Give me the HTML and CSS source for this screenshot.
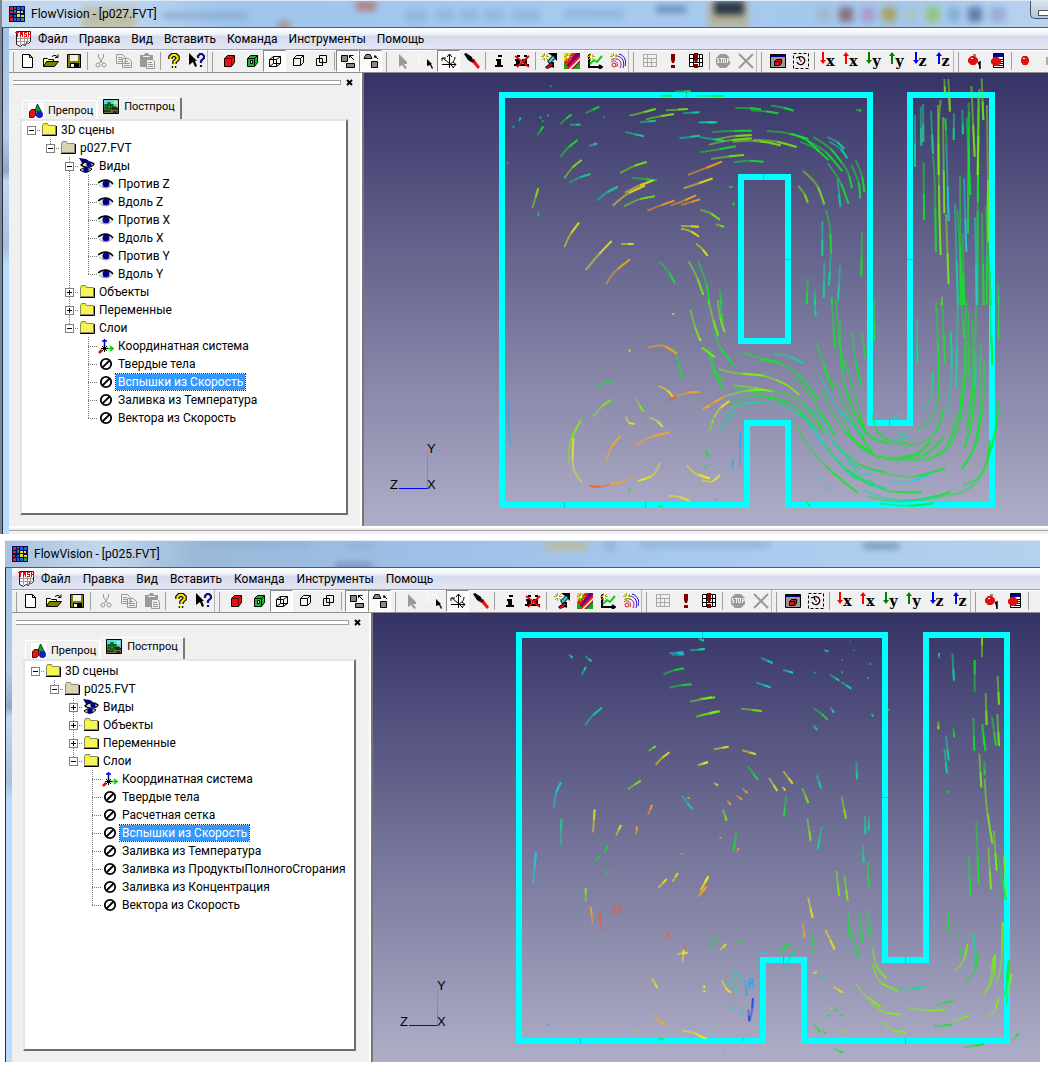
FILE: index.html
```html
<!DOCTYPE html>
<html lang="ru">
<head>
<meta charset="utf-8">
<title>FlowVision</title>
<link rel="stylesheet" href="styles.css">
</head>
<body>
<svg class="sprite" aria-hidden="true">
  <symbol id="i-app" viewBox="0 0 16 16"><path fill="#001060" d="M0 0h16v16H0z"/><path fill="#e02020" d="M1 1h3v3H1zM5 1h2v2H5zM1 5h3v2H1zM1 9h2v2H1zM1 12h3v3H1z"/><path fill="#2060e0" d="M8 1h3v3H8zM12 1h3v3h-3zM5 5h2v2H5zM5 9h2v2H5zM5 12h2v3H5zM8 12h3v3H8z"/><path fill="#f0d820" d="M8 5h3v2H8zM8 8h3v3H8zM12 9h3v2h-3zM12 5h2v2h-2z"/><path fill="#20a060" d="M12 12h3v3h-3zM5 4h2v1H5z"/></symbol>
  <symbol id="i-task" viewBox="0 0 16 16"><path fill="#fff" stroke="#222" d="M1.500.500h14v10l-2 2-2-1-1 3-3-1-2 2-4-2z"/><path stroke="#999" d="M2 7.500h13M2 10.500h12M5.500 6v8M9.500 6v8M12.500 6v6"/><path fill="#e01010" d="M0 1h4v1H3v4H2V2H0zM5 1h3v5H7V4H6v2H5zM9 1h3v1h-2v1h2v3H9V5h2V4H9zM13 1h1v2h2v3h-1V4h-1v2h-1z"/></symbol>
  <symbol id="i-new" viewBox="0 0 16 16"><path fill="#fff" stroke="#000" d="M2.500 1.500h7l3 3v10h-10zM9.500 1.500v3h3"/></symbol>
  <symbol id="i-open" viewBox="0 0 16 16"><path fill="#ffffa0" stroke="#000" d="M.5 13V5.500h4l1 1h5V9"/><path fill="#808000" stroke="#000" d="M.5 13.500l3-5h12l-4 5z"/><path fill="none" stroke="#000" d="M9 3.500l2-1h2l1.500 2M12 4.500h3v-3"/></symbol>
  <symbol id="i-save" viewBox="0 0 16 16"><path fill="#808000" stroke="#000" d="M1.500 1.500h13v13h-13z"/><path fill="#f0f0f0" d="M4 2h8v6H4z"/><path d="M4 10h9v5H4z"/><path fill="#f0f0f0" d="M5 11h3v3H5z"/></symbol>
  <symbol id="i-cut" viewBox="0 0 16 16"><path fill="none" stroke="#999" d="M5.500 1v3l4 6M10.500 1v3l-4 6"/><circle cx="5" cy="12" r="2" fill="none" stroke="#999"/><circle cx="11" cy="12" r="2" fill="none" stroke="#999"/></symbol>
  <symbol id="i-copy" viewBox="0 0 16 16"><path fill="#eee" stroke="#999" d="M.5 1.500h6l3 3v6h-9zM6.500 5.500h6l3 3v6h-9z"/><path stroke="#999" d="M2 4.500h4M2 6.500h4M2 8.500h4M8 8.500h4M8 10.500h6M8 12.500h6"/></symbol>
  <symbol id="i-paste" viewBox="0 0 16 16"><path fill="#999" d="M1 2h4l1-2h3l1 2h4v12H1z"/><path fill="#eee" stroke="#999" d="M7.500 6.500h6l2 2v7h-8z"/><path stroke="#999" d="M9 9.500h4M9 11.500h5M9 13.500h5"/><path stroke="#eee" d="M4 3.500h7"/></symbol>
  <symbol id="i-help" viewBox="0 0 16 16"><path fill="none" stroke="#000" stroke-width="4.500" d="M4.500 6V4l2-2h3l2 2v2l-3 3v2M8 13v2"/><path fill="none" stroke="#f8e800" stroke-width="2.200" d="M4.500 6V4l2-2h3l2 2v2l-3 3v2M8 13v2"/></symbol>
  <symbol id="i-what" viewBox="0 0 16 16"><path d="M0 0l8 8H6l2 5-2 1-2-5-4 3z"/><path fill="none" stroke="#101080" stroke-width="2.200" d="M9 5V3l2-2h2l2 2v2l-3 3v2M12 12v2"/></symbol>
  <symbol id="i-cubered" viewBox="0 0 16 16"><path fill="#f01010" stroke="#000" d="M3.500 5.500l3-3h7v7l-3 4h-7z"/><path fill="none" stroke="#600" d="M3.500 5.500h7v7M10.500 5.500l3-3"/></symbol>
  <symbol id="i-cubegreen" viewBox="0 0 16 16"><path fill="#10c020" stroke="#000" d="M3.500 5.500l3-3h7v7l-3 4h-7z"/><path fill="#eee" stroke="#000" d="M6.500 7.500h2v3h-2z"/><path fill="none" stroke="#000" d="M3.500 5.500h7v7M10.500 5.500l3-3"/></symbol>
  <symbol id="i-cubewire" viewBox="0 0 16 16"><path fill="none" stroke="#000" d="M2.500 6.500h7v7h-7zM6.500 3.500h7v7h-7zM2.500 6.500l4-3M9.500 6.500l4-3M2.500 13.500l4-3M9.500 13.500l4-3"/></symbol>
  <symbol id="i-cube" viewBox="0 0 16 16"><path fill="#f4f4f4" stroke="#000" d="M3.500 5.500l3-3h7v7l-3 3h-7zM3.500 5.500h7v7M10.500 5.500l3-3"/></symbol>
  <symbol id="i-cube2" viewBox="0 0 16 16"><path fill="none" stroke="#000" d="M3.500 5.500h6v7h-6zM6.500 2.500h7v7h-7z"/></symbol>
  <symbol id="i-move" viewBox="0 0 16 16"><path fill="#888" stroke="#000" d="M1.500 2.500h6v6h-6zM6.500 10.500h8v4h-8z"/><path fill="none" stroke="#000" d="M9.500 5V2.500h4M9 2l5 5"/></symbol>
  <symbol id="i-move2" viewBox="0 0 16 16"><path fill="#888" stroke="#000" d="M1 5.500l2-4h4l2 4zM8.500 8.500h6v6h-6z"/><path fill="none" stroke="#000" d="M15 6l-3-3M11 4h3M12 2v3"/></symbol>
  <symbol id="i-arrow" viewBox="0 0 16 16"><path fill="#999" d="M4 1l8 8v2H9l3 4-2 1-3-4-3 2z"/></symbol>
  <symbol id="i-select" viewBox="0 0 16 16"><path fill="none" stroke="#fff" stroke-dasharray="2 1" d="M.5 1.500h9v8h-9z"/><path d="M9 6l5 5h-1l2 4-1 1-2-4-3 1z"/></symbol>
  <symbol id="i-axes" viewBox="0 0 16 16"><path fill="none" stroke="#000" d="M8.500 1v14M6 4l2.500-3L11 4M1 11.500h14M12 9l3 2.500-3 3M2 5l7 6 4 4M1 8V5h4M8 11c4-1 6-4 6-7"/></symbol>
  <symbol id="i-brush" viewBox="0 0 16 16"><path d="M0 1l2-1 6 4 1 3-2 2-3-2z"/><path fill="#f01010" d="M7 8l3-2 6 8-2 2z"/><path fill="#600" d="M7 8l3-2 1 2-3 2z"/></symbol>
  <symbol id="i-info" viewBox="0 0 16 16"><path d="M7 2h4v2H7zM5 6h5v6h2v2H4v-2h2V8H5z"/></symbol>
  <symbol id="i-infox" viewBox="0 0 16 16"><path d="M3 2h3v2H3zM1 6h5v5h2v2H0v-2h2V8H1zM10 2h3v2h-3zM8 6h5v5h2v2H8v-2h2V8H8z"/><path stroke="#e01010" stroke-width="2" d="M1 3l14 11M15 3L3 14"/></symbol>
  <symbol id="i-star" viewBox="0 0 16 16"><path stroke="#aaa820" d="M3.500 0v8M0 3.500h8M1 1l6 6M7 1L1 7"/><path fill="#ffe" d="M3 3h2v2H3z"/></symbol>
  <symbol id="i-vec" viewBox="0 0 16 16"><path d="M7 0h9v8l-2-2-5 5-3-3 5-5zM7 9h6v6l-2-1-5 2-2-2 4-3z"/><path stroke="#30d0e0" stroke-width="2.500" d="M8 9l5-5"/><path stroke="#c01010" stroke-width="2.500" d="M6 15l5-4"/><use href="#i-star"/></symbol>
  <symbol id="i-fill" viewBox="0 0 16 16"><path fill="#700080" d="M0 0h16v16H0z"/><path fill="#f0e010" d="M0 0h9L0 12z"/><path fill="#f02010" d="M8 0h4L1 15H0V9z"/><path fill="#f02010" d="M16 2v6l-8 8H2z"/><path fill="#fff" d="M16 5v2l-9 9H5z"/><path fill="#10b010" d="M16 9v7H9zM0 9v7l5-1z"/><use href="#i-star"/></symbol>
  <symbol id="i-plot" viewBox="0 0 16 16"><path fill="none" stroke="#000" stroke-width="2" d="M2 1v13h13M12 12l3 2-3 2"/><path fill="none" stroke="#10d010" stroke-width="2" d="M3 11l4-4 3 2 5-6"/><use href="#i-star"/></symbol>
  <symbol id="i-iso" viewBox="0 0 16 16"><circle cx="4" cy="12" r="2" fill="none" stroke="#e01010"/><path fill="none" stroke="#d02060" d="M1 9c3-3 8 0 6 5"/><path fill="none" stroke="#a010a0" d="M2 6c7-2 11 4 8 9"/><path fill="none" stroke="#4010c0" d="M6 3c7 0 9 7 7 12"/><path fill="none" stroke="#1010e0" d="M9 1c6 1 8 9 6 12"/><use href="#i-star"/></symbol>
  <symbol id="i-grid" viewBox="0 0 16 16"><path fill="none" stroke="#aaa" d="M1.500 1.500h13v12h-13zM1 5.500h14M1 9.500h14M5.500 1v13M9.500 5v9"/></symbol>
  <symbol id="i-bang" viewBox="0 0 16 16"><path fill="#800000" d="M6 1h4v6L9 10H7L6 7zM6 12h4v3H6z"/></symbol>
  <symbol id="i-gridbang" viewBox="0 0 16 16"><path fill="#fff" stroke="#000" d="M1.500 1.500h13v12h-13zM1 5.500h14M1 9.500h14M5.500 2v12M11.500 2v12"/><path fill="#800000" d="M6 0h4v7L9 9H7L6 7zM6 11h4v4H6z"/></symbol>
  <symbol id="i-stop" viewBox="0 0 16 16"><path fill="#999" d="M5 1h6l4 4v6l-4 4H5l-4-4V5z"/><path fill="none" stroke="#f0f0f0" d="M4 5.500H2.500v2H4v2H2M5 5.500h3M6.500 5v5M8.500 5.500h2v4h-2zM12.500 10V5.500h2v2h-2"/></symbol>
  <symbol id="i-x" viewBox="0 0 16 16"><path stroke="#999" stroke-width="2" d="M1 1l14 14M15 1L1 15"/></symbol>
  <symbol id="i-win" viewBox="0 0 16 16"><path fill="#999" stroke="#000" d="M.5 1.500h15v13H.5z"/><path fill="#000080" d="M1 2h14v2H1z"/><path fill="#e01010" stroke="#000" d="M4.500 8.500l2-2h5v4l-2 2h-5zM4.500 8.500h5v3"/></symbol>
  <symbol id="i-rot" viewBox="0 0 16 16"><path fill="none" stroke="#000" stroke-dasharray="3 2" d="M.5.500h15v15H.5z"/><path fill="none" stroke="#000" stroke-width="1.300" d="M4 9a4 4 0 1 0 2-5M3 5l3-1 1 3"/><circle cx="8" cy="8" r="1" fill="#e01010"/></symbol>
  <symbol id="i-dn" viewBox="0 0 6 16"><path fill="currentColor" d="M2 0h2v8h2l-3 4-3-4h2z"/></symbol>
  <symbol id="i-up" viewBox="0 0 6 16"><path fill="currentColor" d="M2 12h2V4h2L3 0 0 4h2z"/></symbol>
  <symbol id="i-ball1" viewBox="0 0 16 16"><path fill="#e01010" d="M4 3h4l3 3v3l-3 3H4L1 9V6z"/><path fill="#888" d="M6 1h3v2H6z"/><path fill="#fff" d="M4 5h2v1H4z"/><path stroke="#000" stroke-width="1.500" d="M11 10l2-1v7"/></symbol>
  <symbol id="i-balllist" viewBox="0 0 16 16"><path fill="#fff" stroke="#000" d="M3.500.500h10v14h-10z"/><path fill="#000080" d="M4 1h9v3H4z"/><path stroke="#000" d="M5 6.500h8M5 8.500h8M5 10.500h8M5 12.500h8"/><path fill="#e01010" d="M4 4h4l3 3v3l-3 3H4l-3-3V7z"/></symbol>
  <symbol id="i-ball" viewBox="0 0 16 16"><path fill="#e01010" d="M6 3h4l2 3v3l-2 3H6L4 9V6z"/><path fill="#fff" d="M6 5h2v1H6z"/></symbol>
  <symbol id="i-pause" viewBox="0 0 16 16"><path fill="#aaa" d="M6 4h3v8H6z"/></symbol>
  <symbol id="i-folder" viewBox="0 0 16 16"><path fill="#f0f000" stroke="#888860" d="M1.500 12.500v-9l1-2h4l1 2h7v9z"/><path fill="#fff" opacity=".35" d="M2 4h12v8H2z"/><path stroke="#000" fill="none" d="M1 13.500h14.500V4"/></symbol>
  <symbol id="i-folderg" viewBox="0 0 16 16"><path fill="#d8d4b0" stroke="#888880" d="M1.500 12.500v-9l1-2h4l1 2h7v9z"/><path stroke="#000" fill="none" d="M1 13.500h14.500V4"/></symbol>
  <symbol id="i-eye" viewBox="0 0 16 16"><path fill="#eee" d="M1 8c3-4 10-5 14 0-3 4-10 5-14 0z"/><circle cx="8" cy="8" r="3.500" fill="#0000a0"/><path fill="#000" d="M7 7h2v2H7z"/><path fill="none" stroke="#000" stroke-width="1.600" d="M0 7c4-4 11-4 15 1"/><path fill="none" stroke="#999" d="M1 9c4 4 10 4 14-1"/></symbol>
  <symbol id="i-eyes" viewBox="0 0 16 16"><path fill="#000080" d="M0 0l7 1 3 2-4 3-3-1z"/><path fill="#ddd" stroke="#000" stroke-width="1.300" d="M2 7c3-4 10-4 13-1-2 4-10 4-13 1z"/><circle cx="10" cy="6" r="2.600" fill="#000090"/><path fill="#bbb" stroke="#000" d="M1 12c3-3 9-3 12-1-3 4-9 4-12 1z"/><circle cx="7" cy="12" r="2.700" fill="#000080"/></symbol>
  <symbol id="i-coord" viewBox="0 0 16 16"><path stroke="#0000f0" stroke-width="1.500" d="M6.500 1v9M4 3h5"/><path fill="none" stroke="#00d000" stroke-width="1.500" d="M7 10.500h8M12 8l3 2.500L12 13"/><path stroke="#f00000" stroke-width="2.500" d="M1 15l3-3"/><path stroke="#000" d="M4 8l5 5M9 8l-5 5M6.500 7v7M3 10.500h7"/></symbol>
  <symbol id="i-no" viewBox="0 0 16 16"><circle cx="8" cy="8" r="5.200" fill="#fff" stroke="#000" stroke-width="1.800"/><path stroke="#000" stroke-width="1.800" d="M4.500 11.500l7-7"/></symbol>
  <symbol id="i-pre" viewBox="0 0 16 16"><path fill="#fff" d="M0 0h16v16H0z"/><path fill="#10a020" stroke="#043" d="M9.500 1l4 8h-7z"/><path fill="#e01818" stroke="#600" d="M1.500 8.500l2-2h4v6l-2 2h-4z"/><circle cx="11.500" cy="11.500" r="3.500" fill="#1020c0"/></symbol>
  <symbol id="i-post" viewBox="0 0 16 16"><path fill="#60d8e8" stroke="#000" d="M.5.500h15v14H.5z"/><path fill="#706840" d="M1 9h14v5H1z"/><path fill="#303018" d="M9 9l3-2 3 2v2H9zM1 11h3v2H1zM10 12h4v2h-4z"/><path fill="#f8e820" d="M11 2h3v3h-3z"/><path fill="none" stroke="#043008" stroke-width="3" d="M6 13V3M3 5v3h6V5"/><path fill="none" stroke="#20b030" d="M6 12V3M3 5v3h6V5"/></symbol>
</svg>

<main class="page">
  <section class="window window-a" data-window="a" aria-label="FlowVision p027.FVT">
    <header class="titlebar">
      <svg class="glass" aria-hidden="true"><g class="soft">
        <path fill="#c0ba98" d="M80 6h54v22H80z"/><path fill="#7f9fc6" d="M160 12h86v5h-86z"/><path fill="#5f7fa8" d="M654 5h30v7h-30z"/><path fill="#8fb3dc" d="M403 8h22v14h-22zM434 8h18v12h-18zM458 8h18v12h-18zM482 8h20v12h-20zM510 8h28v12h-28zM562 8h60v10h-60z"/><path fill="#b07068" d="M354 0h20v10h-20z"/><path fill="#b48078" d="M276 20h12v8h-12z"/><path fill="#b9ae86" d="M706 0h40v26h-40z"/><path fill="#10151c" d="M712 0h30v14h-30z"/><path fill="#806068" d="M837 6h14v15h-14z"/><path fill="#a894c8" d="M859 6h14v15h-14z"/><path fill="#a89c48" d="M880 6h14v15h-14z"/><path fill="#a8c4c8" d="M902 6h14v15h-14z"/><path fill="#9ab4cc" d="M815 6h14v15h-14z"/><path fill="#8cc464" d="M924 6h14v15h-14z"/><path fill="#78a8d0" d="M946 6h12v15h-12z"/><path fill="#4a6ca0" d="M966 6h14v15h-14z"/><path fill="#98a4d4" d="M988 6h16v15h-16z"/>
      </g></svg>
      <svg class="icon" aria-hidden="true"><use href="#i-app"/></svg>
      <h1 class="title">FlowVision - [p027.FVT]</h1>
      <button class="minimize" aria-label="Свернуть"></button>
    </header>
    <nav class="menubar"></nav>
    <div class="toolbar" role="toolbar"></div>
    <div class="work">
      <aside class="panel"></aside>
      <svg class="scene" viewBox="364 73 684 453" preserveAspectRatio="xMinYMin meet" role="img" aria-label="Вспышки из Скорость, p027">
        <defs><linearGradient id="sky-a" x2="0" y2="1"><stop stop-color="#353366"/><stop offset="1" stop-color="#aeaec8"/></linearGradient></defs>
        <path fill="url(#sky-a)" d="M364 73h684v453H364z"/>
        <path class="wall" d="M502 95H870V423H910V95H992V505H788V423H747V505H502zM741 177H788V341H741z"/>
        <path class="tick" d="M686.500 92v6M763.500 174v6M785 259.500h6M907 259.500h6M564.500 502v6M645.500 502v6M889.500 420v6"/>
        <g class="flow"></g>
        <path stroke="#00f" d="M399 488.500h28"/><path stroke="#0e0" d="M427.500 453v35"/>
        <text class="axis" x="427" y="453">Y</text><text class="axis" x="390" y="489">Z</text><text class="axis" x="427" y="489">X</text>
      </svg>
    </div>
    <footer class="statusbar"></footer>
  </section>

  <section class="window window-b" data-window="b" aria-label="FlowVision p025.FVT">
    <header class="titlebar">
      <svg class="glass" aria-hidden="true"><g class="soft">
        <path fill="#8fb0d6" d="M195 0h110v6H195zM340 2h30v6h-30zM600 0h10v10h-10zM635 0h130v7H635z"/><path fill="#c0ba92" d="M540 0h42v10h-42z"/><path fill="#6786ab" d="M858 2h36v6h-36zM330 22h38v6h-38z"/>
      </g></svg>
      <svg class="icon" aria-hidden="true"><use href="#i-app"/></svg>
      <h1 class="title">FlowVision - [p025.FVT]</h1>
    </header>
    <nav class="menubar"></nav>
    <div class="toolbar" role="toolbar"></div>
    <div class="work">
      <aside class="panel"></aside>
      <svg class="scene" viewBox="373 613 667 449" preserveAspectRatio="xMinYMin meet" role="img" aria-label="Вспышки из Скорость, p025">
        <defs><linearGradient id="sky-b" x2="0" y2="1"><stop stop-color="#353366"/><stop offset="1" stop-color="#aeaec8"/></linearGradient></defs>
        <path fill="url(#sky-b)" d="M373 613h667v449H373z"/>
        <path class="wall" d="M519 635H885V960H926V635H1007V1041H804V960H763V1041H519z"/>
        <path class="tick" d="M702.500 632v6M882 797.500h6M580.500 1038v6M905.500 957v6M783.500 957v6M905.500 1038v6"/>
        <g class="flow"></g>
        <path stroke="#00f" d="M409 1025.500h28"/><path stroke="#0e0" d="M437.500 990v35"/>
        <text class="axis" x="437" y="990">Y</text><text class="axis" x="400" y="1026">Z</text><text class="axis" x="437" y="1026">X</text>
      </svg>
    </div>
  </section>
</main>
<script src="app.js"></script>
</body>
</html>
```
FILE: styles.css
```css
* { box-sizing: border-box; }
body { margin: 0; background: #fff; color: #000; font: 12px/18px Roboto, "Open Sans", sans-serif; }
button { font: inherit; color: inherit; border: 0; padding: 0; margin: 0; background: none; }
.sprite { position: absolute; width: 0; height: 0; }
.icon { width: 16px; height: 16px; flex: none; display: block; }
.page { display: flex; flex-direction: column; gap: 6px; padding-bottom: 10px; }

.window { background: #f0f0f0; border-left: 1px solid #3d4d68; position: relative; }
.window-a { margin-left: 8px; --sep: 4px; --grip: 9px; --menu-gap: 11px; --panel: 355px; --inset: 11px; --inset-right: 14px; }
.window-b { margin-left: 11px; margin-right: 8px; --sep: 6px; --grip: 9px; --menu-gap: 12px; --panel: 361px; --inset: 11px; --inset-right: 15px; }
.window::before { content: ""; position: absolute; top: 0; bottom: 0; left: -7px; width: 6px; border-left: 1px solid #26303e; background: linear-gradient(#9dc0e6 0, #b4cde8 25%, #8ea9c8 32%, #c0d8f2 34%, #a8c0dc 46%, #b9dcff 50%, #b9dcff 100%); }
.window-a::after { content: ""; position: absolute; top: 0; bottom: 0; left: -9px; width: 2px; background: #7d8794; }

.titlebar { position: relative; display: flex; align-items: center; gap: 6px; height: 28px; margin-left: -7px; padding-left: 7px; border-top: 1px solid #dfeaf6; border-bottom: 1px solid #4a5a74; background: linear-gradient(90deg, #c3d8ee 0, #bdd5ef 130px, #9fc4ec 220px, #a8caef 600px, #a4c7ec 900px, #b9d3ee 100%); overflow: hidden; }
.window-b .titlebar { background: linear-gradient(90deg, #a9c2dc 0, #c3d8ec 100px, #9cb9d8 190px, #9dbfe6 400px, #a8caef 700px, #b6d0ee 100%); }
.titlebar > .icon, .title { position: relative; }
.title { margin: 0; font-size: 12px; font-weight: 400; line-height: 18px; }
.glass { position: absolute; left: 0; top: 0; width: 100%; height: 100%; }
.soft { filter: blur(3px); opacity: .8; }
.minimize { position: absolute; right: 0; top: 0; width: 18px; height: 18px; border: 1px solid #44536b; border-width: 0 0 1px 1px; border-radius: 0 0 0 5px; background: linear-gradient(#d8e3ef, #b4c6da); }
.minimize::after { content: ""; position: absolute; right: 0; top: 9px; width: 9px; height: 4px; border: 1px solid #555; border-right: 0; background: #fff; }

.menubar { display: flex; align-items: center; gap: var(--menu-gap); height: 21px; padding-left: 6px; background: linear-gradient(#fff 0, #eef1f9 30%, #d5dbed 40%, #e2e6f4 95%); }
.menubar .icon { margin-right: calc(7px - var(--menu-gap)); }

.toolbar { display: flex; height: 24px; overflow: hidden; border-top: 1px solid #a0a0a0; border-bottom: 1px solid #909090; padding: 0 0 0 2px; background: #f0f0f0; }
.tools { display: flex; flex: none; box-shadow: inset -1px 0 #b8b8b8, inset 0 1px #fff; padding-left: var(--grip); background: linear-gradient(#a0a0a0, #a0a0a0) 4px 2px / 1px 100% no-repeat; }
.tools:first-child { --grip: 5px; background-position: 2px 2px; }
.tool { width: 23px; height: 22px; flex: none; display: flex; align-items: center; justify-content: center; font: bold 14px/16px "DejaVu Serif", serif; }
.tool.pressed { border: 1px solid #888; border-right-color: #fff; border-bottom-color: #fff; background: #fafafa; }
.tool .way { width: 6px; height: 16px; flex: none; }
.sep { width: 1px; height: 18px; flex: none; margin: 2px calc(var(--sep) - 3px) 0 2px; background: #a0a0a0; }

.work { display: flex; align-items: stretch; }
.panel { width: var(--panel); flex: none; display: flex; flex-direction: column; padding: 5px var(--inset-right) 11px var(--inset); border-right: 2px solid #777; box-shadow: inset -2px 0 #fff; }
.dock { display: flex; align-items: center; gap: 4px; height: 9px; margin: 0 -6px 0 -7px; }
.dock-grip { flex: 1; height: 5px; border: 1px solid #a0a0a0; border-left: 0; background: #fff; }
.close { width: 9px; height: 9px; display: flex; }
.close svg { width: 9px; height: 9px; }
.tabs { display: flex; align-items: flex-end; margin: 10px 0 0 2px; font: 11px/16px Roboto, "Liberation Sans", sans-serif; }
.tab { display: flex; align-items: center; gap: 4px; height: 19px; padding: 1px 3px 0 5px; border: 1px solid #fff; border-bottom: 0; border-radius: 2px 2px 0 0; }
.tab.active { height: 22px; gap: 5px; padding: 0 5px 3px 5px; border-right: 2px solid #777; }
.tree { flex: 1; margin: 0; padding: 0; list-style: none; background: #fff; border: 2px solid #e4e4e4; border-right-color: #6d6d6d; border-bottom-color: #6d6d6d; display: grid; grid-auto-rows: 18px; }
.window-b .tree { padding: 1px 0 0 1px; }
.row { display: flex; align-items: center; height: 18px; white-space: nowrap; }
.cell { position: relative; width: 19px; height: 18px; flex: none; background-repeat: no-repeat; }
.cell.line, .cell.tee { background-image: repeating-linear-gradient(#777 0 1px, #fff 1px 2px); background-size: 1px 100%; background-position: 9px 0; }
.cell.end { background-size: 1px 9px; }
.cell.tee::after, .cell.box::after { content: ""; position: absolute; left: 9px; right: 0; top: 9px; height: 1px; background: repeating-linear-gradient(90deg, #777 0 1px, #fff 1px 2px); }
.cell.branch::before { content: ""; position: absolute; left: 9px; top: 0; bottom: 0; width: 1px; background: repeating-linear-gradient(#777 0 1px, #fff 1px 2px); }
.cell.last::before { bottom: 9px; }
.toggle { position: absolute; z-index: 1; left: 5px; top: 5px; width: 9px; height: 9px; border: 1px solid #808080; background: linear-gradient(#000, #000) 1px 3px / 5px 1px no-repeat #fff; }
.toggle.plus { background: linear-gradient(#000, #000) 1px 3px / 5px 1px no-repeat, linear-gradient(#000, #000) 3px 1px / 1px 5px no-repeat #fff; }
.name { margin-left: 3px; padding: 0 1px; line-height: 16px; }
.name.selected { margin-left: 2px; color: #fff; background: #3399ff; outline: 1px dotted #402000; padding: 0 2px; }

.scene { flex: 1; min-width: 0; display: block; }
.wall { fill: none; stroke: #0ff; stroke-width: 6; }
.tick { stroke: #0cc4d0; }
.flow path { fill: none; stroke-width: 6; }
.flow .tail { opacity: .5; }
.flow .head { opacity: .65; }
.axis { font: 13px "Liberation Sans", Arial, sans-serif; }
.statusbar { height: 8px; background: linear-gradient(#fff 0 2px, #f0f0f0 2px 4px, #a0a0a0 4px 5px, #f0f0f0 5px); }
```
FILE: app.js
```js
const menus = ["Файл", "Правка", "Вид", "Вставить", "Команда", "Инструменты", "Помощь"];

// "|" is a separator, "*" marks a pressed button, "dn:x:#c00" is an arrow with an axis letter.
const tools = [
  "new open save | cut copy paste | help what",
  "cubered cubegreen *cubewire cube cube2 | *move *move2",
  "arrow select *axes brush | info infox | vec fill plot iso",
  "grid bang gridbang | stop x",
  "win rot | dn:x:#f00 up:x:#f00 dn:y:#008000 up:y:#008000 dn:z:#00f up:z:#00f",
  "ball1 balllist | ball pause"
];

const icon = (name, cls = "icon") => `<svg class="${cls}" aria-hidden="true"><use href="#i-${name}"/></svg>`;

function toolButton(t) {
  if (t === "|") return '<span class="sep"></span>';
  const pressed = t[0] === "*";
  const [name, letter, color] = t.replace("*", "").split(":");
  const body = letter ? `<span style="color:${color}">${icon(name, "way")}</span>${letter}` : icon(name);
  return `<button class="tool${pressed ? " pressed" : ""}" aria-label="${name}${letter || ""}">${body}</button>`;
}

// Cells before the icon, icon, text. Cells: "." blank, "i" line, "t" tee, "e" last tee, "-" and "+" boxes, "m", "p" and "l" boxes on a branch line.
const trees = {
  a: [["-", "folder", "3D сцены"], [".l", "folderg", "p027.FVT"], ["..m", "eyes", "Виды"],
    ["..it", "eye", "Против Z"], ["..it", "eye", "Вдоль Z"], ["..it", "eye", "Против X"], ["..it", "eye", "Вдоль X"], ["..it", "eye", "Против Y"], ["..ie", "eye", "Вдоль Y"],
    ["..p", "folder", "Объекты"], ["..p", "folder", "Переменные"], ["..l", "folder", "Слои"],
    ["...t", "coord", "Координатная система"], ["...t", "no", "Твердые тела"], ["...t", "no", "Вспышки из Скорость"], ["...t", "no", "Заливка из Температура"], ["...e", "no", "Вектора из Скорость"]],
  b: [["-", "folder", "3D сцены"], [".l", "folderg", "p025.FVT"], ["..p", "eyes", "Виды"], ["..p", "folder", "Объекты"], ["..p", "folder", "Переменные"], ["..l", "folder", "Слои"],
    ["...t", "coord", "Координатная система"], ["...t", "no", "Твердые тела"], ["...t", "no", "Расчетная сетка"], ["...t", "no", "Вспышки из Скорость"], ["...t", "no", "Заливка из Температура"],
    ["...t", "no", "Заливка из ПродуктыПолногоСгорания"], ["...t", "no", "Заливка из Концентрация"], ["...e", "no", "Вектора из Скорость"]]
};

const box = (cls, plus) => `<span class="cell box ${cls}"><button class="toggle${plus ? " plus" : ""}" aria-label="${plus ? "Развернуть" : "Свернуть"} ветвь"></button></span>`;
const cells = {
  ".": '<span class="cell"></span>',
  i: '<span class="cell line"></span>',
  t: '<span class="cell tee"></span>',
  e: '<span class="cell tee end"></span>',
  "-": box("", false),
  m: box("branch", false),
  p: box("branch", true),
  l: box("branch last", false)
};

function panel(id) {
  const rows = trees[id].map(([lead, ic, name]) => {
    const sel = name === "Вспышки из Скорость" ? " selected" : "";
    return `<li class="row">${[...lead].map(c => cells[c]).join("")}${icon(ic)}<span class="name${sel}">${name}</span></li>`;
  }).join("");
  return `<div class="dock"><span class="dock-grip"></span><button class="close" aria-label="Закрыть"><svg viewBox="0 0 9 9"><path stroke="#000" stroke-width="2" d="M2 2l5 5M7 2L2 7"/></svg></button></div>
    <div class="tabs"><button class="tab">${icon("pre")}Препроц</button><button class="tab active">${icon("post")}Постпроц</button></div>
    <ul class="tree">${rows}</ul>`;
}

const hues = { g: "#10e828", t: "#10dc98", c: "#18d4e0", l: "#7ef010", y: "#f0e810", o: "#ffa810", r: "#ff5a18", b: "#1840e8", k: "#28a8f0" };

// Traces by quadrant: origin, then "hue: x y x y, ..." with the bright end last; three units to a pixel.
const flows = {
  a: [
    { at: [370, 75], lines: {
      g: "646 115 688 95,571 147 588 131 605 119,502 180 520 154,571 246 592 220 623 195,868 559 895 590 915 626,985 560 1010 630 1018 690,505 410 505 422,870 63 905 62,915 49 963 49,980 63 1062 63,786 308 860 316",
      t: "600 149 632 149,446 140 452 128,409 265 415 265,598 323 630 307 661 297,680 377 710 353 744 335,810 142 857 137,766 171 822 184,940 115 988 112,985 142 1042 142,928 190 990 182,508 129 514 127,530 121 536 122,540 33 544 35,701 125 705 125,427 155 433 155,516 138 520 138",
      c: "658 213 681 205",
      l: "778 122 815 113 857 102,828 133 870 124 912 117,888 106 953 102,583 310 605 280 635 255,751 294 790 274 830 261,763 394 805 374 854 364,487 400 505 340,990 404 1020 414 1050 435,956 558 980 605 1000 660",
      y: "764 353 800 335 850 316,728 392 770 358 825 332,753 507 791 507,647 585 685 540 725 498,583 517 600 480 627 443,933 453 987 455,933 461 960 468 987 485,978 506 995 520 1013 543,940 340 980 327 1028 310",
      o: "954 300 1000 282 1056 260,832 407 870 392 913 377,903 391 940 378 978 361,934 390 990 373,708 627 735 590 780 553" } },
    { at: [700, 75], lines: {
      g: "106 99 150 100 183 103,153 106 195 109 235 115,213 92 250 98 281 107,37 171 90 168 155 167,468 104 484 107,0 232 50 224 107 214,102 262 145 257 191 260,85 336 97 336,98 380 102 390,201 168 260 174 325 192,275 176 320 196 358 228,300 200 345 220 386 255,340 186 390 220 425 262,300 185 370 225 427 288,383 264 420 320 446 387,425 262 445 295 456 340,454 270 475 320 481 370,467 256 485 300 493 350,378 405 390 460 393 537,486 472 484 605,324 610 320 686,60 645 64 690,395 665 396 690,671 262 672 434,699 240 704 320 708 532,780 303 782 690,806 82 804 475,800 127 811 360,834 65 833 400 832 690,846 415 851 690,862 355 860 690,788 475 792 690,894 625 896 690,772 405 784 600 790 690,858 395 867 560 872 690,740 210 736 130,808 110 806 300,835 100 834 380",
      t: "0 187 72 197,0 142 42 142,382 186 410 200 433 222,388 200 420 220 442 250,413 312 421 395,367 438 367 542,392 540 387 632,373 563 371 668,420 571 414 678,344 642 345 690,662 95 664 212,669 87 670 200,645 120 645 275,693 108 699 237,762 115 761 195,787 105 789 178,765 388 768 500 771 600 774 690",
      c: "739 207 746 438,792 310 799 530,825 427 830 690",
      l: "27 209 80 197 155 190,50 193 100 184 155 180,98 200 150 197 200 202 242 211,160 195 220 198 290 216,33 252 80 245 132 240,47 448 72 455,309 287 350 330 373 388,294 332 312 355 324 383,722 75 716 160 718 400 722 540,714 90 716 300,729 127 733 415,738 418 746 628,733 12 735 52,745 12 750 110,814 33 824 245,845 10 850 135,838 42 833 300,861 90 866 500,726 665 725 690" } },
    { at: [370, 300], lines: {
      g: "911 142 925 190 938 236,681 267 700 250 728 243,773 573 781 568,862 619 878 619,1005 452 1015 468",
      l: "961 30 975 80 991 123,671 349 695 320 722 300,596 492 600 430 632 361,797 296 820 336,995 142 1020 160",
      y: "905 42 912 42,774 152 782 152,635 548 612 510 608 470 610 415,768 349 775 367 794 372,838 352 860 362 878 381,866 258 890 270 909 290,870 488 850 525 804 543,950 496 975 520 1020 536,897 588 925 590 959 603",
      o: "835 143 875 136 922 161,785 531 755 546 720 553,708 484 725 440 751 409,918 290 950 279 987 276,793 438 840 412 899 397,998 327 1020 318",
      r: "720 553 690 560 660 558,891 302 918 290",
      k: "422 440 415 370 414 304" } },
    { at: [700, 300], lines: {
      g: "60 0 68 70,40 70 60 140 101 195,20 145 45 215 70 243,30 150 45 220 68 266,127 156 180 175 243 187,178 180 250 195 300 230 355 300,100 266 145 270 183 283,90 315 150 288 220 295 275 313,220 272 290 295 340 345 370 400,283 235 330 285 370 350 405 407,200 290 270 310 310 345 350 390,285 373 330 445 390 510 475 580,365 420 430 500 520 560,400 430 480 495 555 517,365 270 410 360 450 410 520 465,350 127 375 205 390 245,370 205 400 267,395 0 405 145,408 0 415 100 432 212,420 58 425 210 460 330 500 400,434 180 470 300 500 400 565 430,404 240 450 350 520 465,457 97 465 170 483 257,487 95 495 172,428 355 470 430 522 463,522 0 523 123,517 340 530 390 570 425,520 465 580 475 660 462,525 468 600 480 660 455 693 422,560 478 650 475 700 445 733 410,625 483 700 470 745 430 775 340,680 483 740 450 775 380 795 230,555 520 640 530 735 505,500 590 600 605 700 590 752 575,505 540 560 572 665 577,540 610 620 617 700 610,787 557 840 530 862 480 870 422,720 590 800 570 850 510 885 400 896 305,568 430 625 430,618 440 680 420 715 380 728 330,648 390 690 360 715 290 716 190,708 5 717 210,726 0 735 193,785 0 793 115,799 0 797 110 795 230,818 58 818 250 800 390,828 15 820 330 793 445,842 130 835 400 785 508,852 180 850 300 825 440,806 33 805 235,870 0 877 195,896 0 895 120,790 230 780 330,18 450 25 470,15 505 20 498,318 605 330 618,320 0 321 12",
      t: "222 162 265 168 310 190,63 398 80 360 102 341,75 347 115 315 175 307,175 307 240 315 300 345 350 390,310 320 360 350 400 425 480 510,345 400 400 470 470 540,360 228 410 320 490 405,490 570 560 595 650 600 720 590,675 328 695 280 698 213,742 345 755 200 752 97,585 410 612 398,570 422 600 420 625 408,651 58 652 188,774 0 768 262,344 0 347 50,440 480 500 545 560 565,828 165 826 260",
      c: "318 365 345 395 370 430,568 548 630 545 688 525,570 360 595 345,485 522 512 524,354 535 362 540,370 558 378 560,388 565 397 567",
      k: "120 500 121 393,98 507 98 482,46 598 52 600",
      l: "25 0 40 60 55 107,53 0 60 50 74 97,56 206 100 218 190 227,130 220 200 230 260 255 298 285,100 256 150 262 218 275,70 290 140 272 200 270,5 143 45 172,30 392 40 358",
      y: "42 353 60 325 88 303,0 525 30 535,5 540 35 545 60 525,0 117 4 120",
      o: "8 327 40 308 70 291" } }
  ],
  b: [
    { at: [370, 620], lines: {
      c: "597 104 608 113,898 100 940 97,905 104 942 103,551 563 558 520 573 487,489 792 498 697",
      t: "646 109 665 124,635 164 648 140,960 91 1005 87,985 55 1002 62,645 316 668 287 696 263,573 676 574 597,935 527 967 568",
      g: "880 164 905 153 942 145,898 203 930 196 965 193,703 700 713 676,678 722 688 708,707 753 707 764,722 750 725 752,862 1258 880 1258,1015 978 1020 980",
      l: "960 245 1000 237 1035 232,978 290 1050 274,836 393 857 378,773 508 812 482,647 845 647 804,795 1230 801 1230",
      y: "857 435 875 415 898 397,983 436 1013 427,669 637 674 568,738 647 753 615,865 804 890 777,907 786 924 759,995 808 1015 770,921 1002 953 998,938 1025 941 990,846 1075 862 1104,935 1231 970 1238 1005 1256,997 1100 1005 1100,1000 1114 1006 1114",
      o: "834 584 846 555,798 645 801 620,668 910 662 862,950 534 960 534,983 831 1010 800,932 701 937 702,853 1184 865 1200 885 1215",
      r: "695 932 688 882,735 889 735 855,750 881 748 855,888 955 899 934,945 985 946 977",
      k: "530 1214 536 1214" } },
    { at: [700, 620], lines: {
      t: "183 114 218 129,390 164 418 182,424 186 454 206,371 90 385 94,341 158 346 158,424 155 428 158,450 64 452 65,460 90 462 92,424 119 427 121,508 131 513 132,502 173 507 174,515 280 519 290,0 88 14 87,0 58 10 62,350 465 363 505,469 427 471 478,495 588 496 642,507 592 506 632,488 676 491 727,252 1042 285 990,362 1068 375 1074,592 1102 630 1107 674 1100,822 1036 822 940,757 101 762 182,717 115 717 99,738 346 746 422,733 386 741 460,88 1160 100 1165,100 1048 108 1060,88 1062 92 1066,96 1078 104 1070,112 1082 118 1078,84 1088 90 1092,100 1100 106 1094,114 1100 120 1096,92 1110 98 1108,104 1122 110 1118,122 1072 127 1068,108 1108 112 1112,75 1082 80 1090,366 619 353 687",
      c: "249 150 279 158,169 188 212 202,392 262 402 278,341 315 351 330,177 1002 185 1001,192 998 200 997,124 1168 125 1188,128 1085 134 1080,112 1060 118 1066,70 1293 73 1294",
      k: "135 1080 140 1128,158 1108 158 1075,147 1110 150 1075,128 1258 133 1260,142 1098 156 1090",
      b: "150 1200 156 1170 159 1134,145 1168 148 1204",
      g: "340 264 365 282 383 299,563 264 567 272,144 439 174 480,258 528 252 590,503 727 506 802,109 635 101 692,446 874 447 954,453 929 476 1012,477 880 488 971,500 870 512 952,338 1003 339 948,25 980 50 955,235 995 270 970,240 996 262 980,113 968 130 969,708 1154 759 1143,702 1219 755 1214,343 1214 360 1236,366 1230 376 1241,402 1287 430 1298,790 1282 851 1273,938 1262 955 1241,797 1090 825 1050 833 995,782 985 779 1005,745 875 746 910,747 945 746 910,920 1155 927 1020,915 1130 925 1030,775 942 778 948,824 215 824 120,760 325 763 352,820 294 823 392,845 315 857 393,848 312 853 375,876 291 888 377,853 424 854 466,829 606 836 794,738 515 746 515,807 708 811 828,893 703 918 840,726 593 728 595,378 1190 388 1185,402 1168 414 1172,420 1184 428 1186,50 1050 53 1052",
      l: "0 236 36 232,0 286 52 274,123 266 185 273,69 568 80 602,307 505 325 549,425 530 438 596,322 596 332 662,409 752 417 827,433 767 443 842,467 1091 500 1130 543 1160,515 1150 550 1175 602 1184,516 1030 540 1085 595 1113,517 983 530 1040 560 1075,624 1164 680 1172 735 1169,757 1203 810 1187,545 1208 580 1230 620 1239,421 1227 438 1236,765 1052 790 1025 803 972,850 1126 880 1070 885 1003,860 1190 885 1170 895 1133,890 1090 905 1020 908 907,922 1130 935 1062,846 112 846 45,893 168 897 254,857 220 860 315,715 304 715 328,892 282 897 378,838 400 844 502,854 475 860 560 877 670,865 682 873 808,881 633 890 752,919 830 913 708,868 1105 882 1010,388 1166 396 1164",
      y: "42 388 86 380,126 391 168 403,0 434 23 426,207 474 232 513,250 454 278 491,247 500 256 511,42 489 54 496,324 832 338 894,376 929 404 988,0 812 25 769,60 990 78 973,338 1058 350 1058,400 1100 428 1118,65 1080 78 1105 93 1118,8 1100 16 1100,8 1113 14 1113,0 1250 18 1255",
      o: "82 541 92 555,110 526 126 539,127 506 143 519,308 910 314 952,58 652 64 654,112 695 116 684,0 825 12 808" } }
  ]
};

// Smooth curve through the given points.
function curve(p) {
  let d = `M${p[0]}`;
  for (let i = 0; i < p.length - 1; i++) {
    const a = p[i - 1] || p[i], b = p[i], c = p[i + 1], e = p[i + 2] || c;
    d += `C${b[0] + (c[0] - a[0]) / 6} ${b[1] + (c[1] - a[1]) / 6} ${c[0] - (e[0] - b[0]) / 6} ${c[1] - (e[1] - b[1]) / 6} ${c}`;
  }
  return d;
}

function traces(part) {
  const paths = Object.entries(part.lines).map(([hue, list]) => list.split(",").map(s => {
    const n = s.trim().split(" ").map(Number), p = [];
    for (let i = 0; i < n.length; i += 2) p.push([n[i], n[i + 1]]);
    const d = curve(p);
    return `<path class="tail" stroke="${hues[hue]}" d="${d}"/><path class="head" stroke="${hues[hue]}" pathLength="100" stroke-dasharray="0 55 45" d="${d}"/>`;
  }).join("")).join("");
  return `<g transform="translate(${part.at}) scale(.33333)">${paths}</g>`;
}

document.querySelectorAll(".window").forEach(w => {
  const id = w.dataset.window;
  w.querySelector(".menubar").innerHTML = icon("task") + menus.map(m => `<button class="menu">${m}</button>`).join("");
  w.querySelector(".toolbar").innerHTML = tools.map(g => `<div class="tools">${g.split(" ").map(toolButton).join("")}</div>`).join("");
  w.querySelector(".panel").innerHTML = panel(id);
  w.querySelector(".flow").innerHTML = flows[id].map(traces).join("");
});
```
